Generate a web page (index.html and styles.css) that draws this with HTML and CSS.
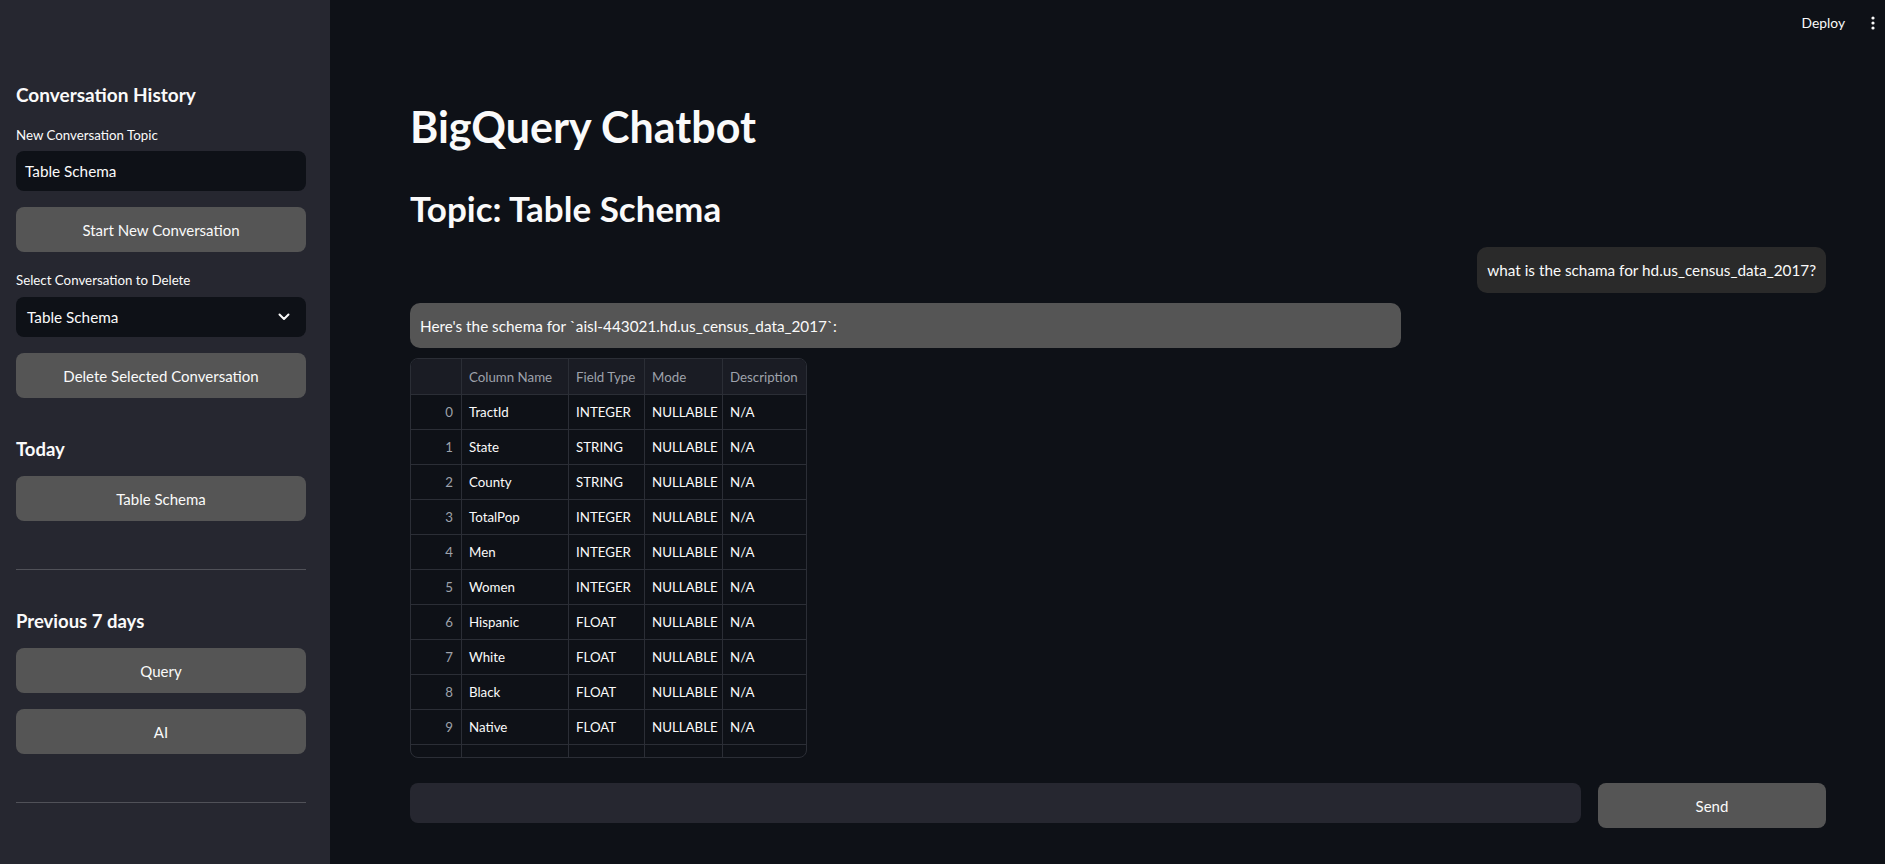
FILE: index.html
```html
<!DOCTYPE html>
<html lang="en">
<head>
<meta charset="utf-8">
<title>BigQuery Chatbot</title>
<link rel="stylesheet" href="styles.css">
</head>
<body>
<div class="app">
  <aside class="sidebar">
    <h3 class="side-title">Conversation History</h3>
    <div class="field-label">New Conversation Topic</div>
    <div class="text-input">Table Schema</div>
    <button class="btn btn-start">Start New Conversation</button>
    <div class="field-label field-label-2">Select Conversation to Delete</div>
    <div class="select">
      <span>Table Schema</span>
      <svg class="chevron" width="12" height="8" viewBox="0 0 12 8"><path d="M1.5 1.5 L6 6 L10.5 1.5" fill="none" stroke="#fafafa" stroke-width="2" stroke-linecap="round" stroke-linejoin="round"/></svg>
    </div>
    <button class="btn btn-delete">Delete Selected Conversation</button>
    <h4 class="side-section side-today">Today</h4>
    <button class="btn btn-hist">Table Schema</button>
    <hr class="divider divider-1">
    <h4 class="side-section side-prev">Previous 7 days</h4>
    <button class="btn btn-hist">Query</button>
    <button class="btn btn-hist btn-gap">AI</button>
    <hr class="divider divider-2">
  </aside>
  <main class="main">
    <header class="topbar">
      <span class="deploy">Deploy</span>
      <svg class="dots" width="4" height="14" viewBox="0 0 4 14"><circle cx="2" cy="2" r="1.6" fill="#fafafa"/><circle cx="2" cy="7" r="1.6" fill="#fafafa"/><circle cx="2" cy="12" r="1.6" fill="#fafafa"/></svg>
    </header>
    <div class="content">
      <h1 class="title">BigQuery Chatbot</h1>
      <h2 class="topic">Topic: Table Schema</h2>
      <div class="msg msg-user">what is the schama for hd.us_census_data_2017?</div>
      <div class="msg msg-bot">Here's the schema for `aisl-443021.hd.us_census_data_2017`:</div>
      <div class="grid">
        <div class="cell head idx"></div>
        <div class="cell head">Column Name</div>
        <div class="cell head">Field Type</div>
        <div class="cell head">Mode</div>
        <div class="cell head last">Description</div>

        <div class="cell idx">0</div><div class="cell">TractId</div><div class="cell">INTEGER</div><div class="cell">NULLABLE</div><div class="cell last">N/A</div>
        <div class="cell idx">1</div><div class="cell">State</div><div class="cell">STRING</div><div class="cell">NULLABLE</div><div class="cell last">N/A</div>
        <div class="cell idx">2</div><div class="cell">County</div><div class="cell">STRING</div><div class="cell">NULLABLE</div><div class="cell last">N/A</div>
        <div class="cell idx">3</div><div class="cell">TotalPop</div><div class="cell">INTEGER</div><div class="cell">NULLABLE</div><div class="cell last">N/A</div>
        <div class="cell idx">4</div><div class="cell">Men</div><div class="cell">INTEGER</div><div class="cell">NULLABLE</div><div class="cell last">N/A</div>
        <div class="cell idx">5</div><div class="cell">Women</div><div class="cell">INTEGER</div><div class="cell">NULLABLE</div><div class="cell last">N/A</div>
        <div class="cell idx">6</div><div class="cell">Hispanic</div><div class="cell">FLOAT</div><div class="cell">NULLABLE</div><div class="cell last">N/A</div>
        <div class="cell idx">7</div><div class="cell">White</div><div class="cell">FLOAT</div><div class="cell">NULLABLE</div><div class="cell last">N/A</div>
        <div class="cell idx">8</div><div class="cell">Black</div><div class="cell">FLOAT</div><div class="cell">NULLABLE</div><div class="cell last">N/A</div>
        <div class="cell idx">9</div><div class="cell">Native</div><div class="cell">FLOAT</div><div class="cell">NULLABLE</div><div class="cell last">N/A</div>
        <div class="cell idx"></div><div class="cell"></div><div class="cell"></div><div class="cell"></div><div class="cell last"></div>
      </div>
      <div class="chat-row">
        <div class="chat-input"></div>
        <button class="send">Send</button>
      </div>
    </div>
  </main>
</div>
</body>
</html>
```

FILE: styles.css
```css
* { box-sizing: border-box; }

html, body {
  margin: 0;
  padding: 0;
  background: #0e1117;
  color: #fafafa;
  font-family: "Lato", "Source Sans Pro", sans-serif;
}

.app {
  display: flex;
  width: 1885px;
  height: 864px;
  overflow: hidden;
}

/* ---------- Sidebar ---------- */
.sidebar {
  width: 330px;
  flex: none;
  background: #262730;
  padding: 83px 24px 0 16px;
  display: flex;
  flex-direction: column;
}

.side-title {
  margin: 0;
  font-size: 19px;
  line-height: 24px;
  font-weight: 700;
  height: 24px;
}

.field-label {
  margin-top: 18px;
  font-size: 13.3px;
  line-height: 20px;
  height: 20px;
}
.field-label-2 { margin-top: 18px; }

.text-input {
  margin-top: 6px;
  height: 40px;
  background: #0e1117;
  border-radius: 8px;
  padding: 0 9px;
  display: flex;
  align-items: center;
  font-size: 15.3px;
}

.select {
  margin-top: 7px;
  height: 40px;
  background: #0e1117;
  border-radius: 8px;
  padding: 0 16px 0 11px;
  display: flex;
  align-items: center;
  justify-content: space-between;
  font-size: 15.3px;
}

.btn {
  display: flex;
  align-items: center;
  justify-content: center;
  width: 100%;
  height: 45px;
  border: none;
  border-radius: 8px;
  background: #555555;
  color: #fafafa;
  font-family: inherit;
  font-size: 15px;
  padding: 0;
}
.btn-start { margin-top: 16px; }
.btn-delete { margin-top: 16px; }
.btn-hist { margin-top: 15px; }
.btn-gap { margin-top: 16px; }

.side-section {
  margin: 0;
  font-size: 18.5px;
  line-height: 24px;
  height: 24px;
  font-weight: 700;
}
.side-today { margin-top: 39px; }
.side-prev { margin-top: 39px; }

.divider {
  border: none;
  border-top: 1px solid rgba(250, 250, 250, 0.2);
  margin: 0;
  height: 0;
}
.divider-1 { margin-top: 48px; }
.divider-2 { margin-top: 48px; }

/* ---------- Main ---------- */
.main {
  flex: 1;
  display: flex;
  flex-direction: column;
}

.topbar {
  height: 46px;
  display: flex;
  align-items: center;
  justify-content: flex-end;
  padding-right: 10px;
  gap: 26px;
}
.deploy {
  font-size: 13.8px;
  line-height: 20px;
}
.dots { display: block; }

.content {
  padding: 0 59px 0 80px;
  display: flex;
  flex-direction: column;
}

.title {
  margin: 54px 0 0 0;
  font-size: 43px;
  line-height: 53px;
  font-weight: 700;
}

.topic {
  margin: 35px 0 0 0;
  font-size: 35px;
  line-height: 41px;
  font-weight: 700;
}

.msg {
  display: flex;
  align-items: center;
  font-size: 15.3px;
  border-radius: 10px;
}
.msg-user {
  margin-top: 18px;
  align-self: flex-end;
  height: 46px;
  padding: 0 10px;
  background: #2a2a2a;
}
.msg-bot {
  margin-top: 10px;
  width: 70%;
  height: 45px;
  padding: 0 10px;
  background: #555555;
}

.grid {
  margin-top: 10px;
  width: 397px;
  height: 400px;
  border: 1px solid #2b2e36;
  border-radius: 8px;
  overflow: hidden;
  display: grid;
  grid-template-columns: 51px 107px 76px 78px 83px;
  grid-template-rows: 36px;
  grid-auto-rows: 35px;
  font-size: 13.3px;
}

.cell {
  border-right: 1px solid #2b2e36;
  border-bottom: 1px solid #2b2e36;
  display: flex;
  align-items: center;
  padding: 0 7px;
  white-space: nowrap;
  overflow: hidden;
  color: #fafafa;
}
.cell.last { border-right: none; }
.cell.head {
  background: #1a1c24;
  color: #9ea2ab;
}
.cell.idx {
  justify-content: flex-end;
  padding-right: 8px;
  color: #9ea2ab;
}

.chat-row {
  margin-top: 25px;
  display: flex;
  align-items: flex-start;
  gap: 17px;
}
.chat-input {
  flex: 1;
  height: 40px;
  background: #262730;
  border-radius: 8px;
}
.send {
  width: 228px;
  height: 45px;
  flex: none;
  border: none;
  border-radius: 8px;
  background: #555555;
  color: #fafafa;
  font-family: inherit;
  font-size: 15px;
}
```
